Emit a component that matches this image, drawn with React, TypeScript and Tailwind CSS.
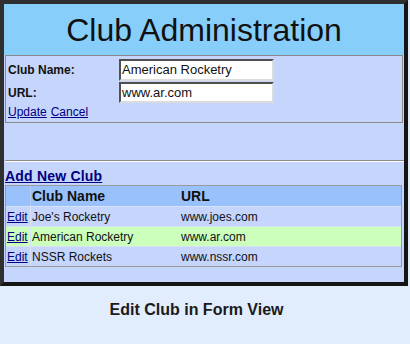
import React from "react";

const rows = [
  { name: "Joe's Rocketry", url: "www.joes.com", sel: false },
  { name: "American Rocketry", url: "www.ar.com", sel: true },
  { name: "NSSR Rockets", url: "www.nssr.com", sel: false },
];

export default function App() {
  return (
    <div className="w-[410px] h-[344px] bg-[#e1ecfd] font-['Liberation_Sans',Arial,sans-serif] text-[#111]">
      <div className="w-[408px] h-[286px] border-4 border-[#2f2f2f] border-r-[#151515] border-b-[#151515] bg-[#c5d5fc] flex flex-col">
        <div className="h-[51px] bg-[#87cefa] flex items-center justify-center text-[32px] leading-none text-[#111] pt-[1px]">
          Club Administration
        </div>
        <div className="mx-px h-[68px] border border-[#8a8a8a] pt-[3px] pl-[2px] flex flex-col">
          <div className="flex items-center h-[22px]">
            <span className="w-[111px] text-[12px] font-bold">Club Name:</span>
            <div className="w-[155px] h-[22px] border-2 border-t-[#505050] border-l-[#505050] border-b-[#dcdcdc] border-r-[#dcdcdc] bg-white text-[13px] leading-[18px] pl-[1px]">
              American Rocketry
            </div>
          </div>
          <div className="flex items-center h-[21px] mt-[1px]">
            <span className="w-[111px] text-[12px] font-bold">URL:</span>
            <div className="w-[155px] h-[21px] border-2 border-t-[#505050] border-l-[#505050] border-b-[#dcdcdc] border-r-[#dcdcdc] bg-white text-[13px] leading-[17px] pl-[1px]">
              www.ar.com
            </div>
          </div>
          <div className="mt-[2px] text-[12px] leading-[15px] flex gap-[4px] text-[#000080]">
            <span className="underline">Update</span>
            <span className="underline">Cancel</span>
          </div>
        </div>
        <div className="mt-[37px] ml-px border-t border-t-[#8a8a8a] border-b border-b-white" />
        <div className="mt-[7px] ml-px text-[14px] leading-[15px] font-bold tracking-[0.2px] text-[#000080] underline">
          Add New Club
        </div>
        <div className="ml-px mr-[2px] mt-[1px] border border-[#9a9a9a] flex flex-col">
          <div className="flex h-[20px] bg-[#99c1fc] items-center text-[14px] font-bold">
            <span className="w-[25px] h-full border-r border-[#b5cdf5]" />
            <span className="w-[149px] pl-[1px]">Club Name</span>
            <span className="pl-[1px]">URL</span>
          </div>
          {rows.map((r) => (
            <div
              key={r.name}
              className={
                r.sel
                  ? "flex h-[20px] items-center text-[12px] bg-[#ccffbb] border-t border-[#d8e2f5]"
                  : "flex h-[20px] items-center text-[12px] bg-[#c5d5fc] border-t border-[#d8e2f5]"
              }
            >
              <span className="w-[25px] h-full flex items-center pl-[1px] border-r border-[#d8e2f5] text-[#000080] underline">
                Edit
              </span>
              <span className="w-[149px] pl-[1px]">{r.name}</span>
              <span className="pl-[1px]">{r.url}</span>
            </div>
          ))}
        </div>
      </div>
      <div className="w-[393px] mt-[15px] text-center text-[16px] leading-[18px] font-bold text-[#1a1a1a]">
        Edit Club in Form View
      </div>
    </div>
  );
}
